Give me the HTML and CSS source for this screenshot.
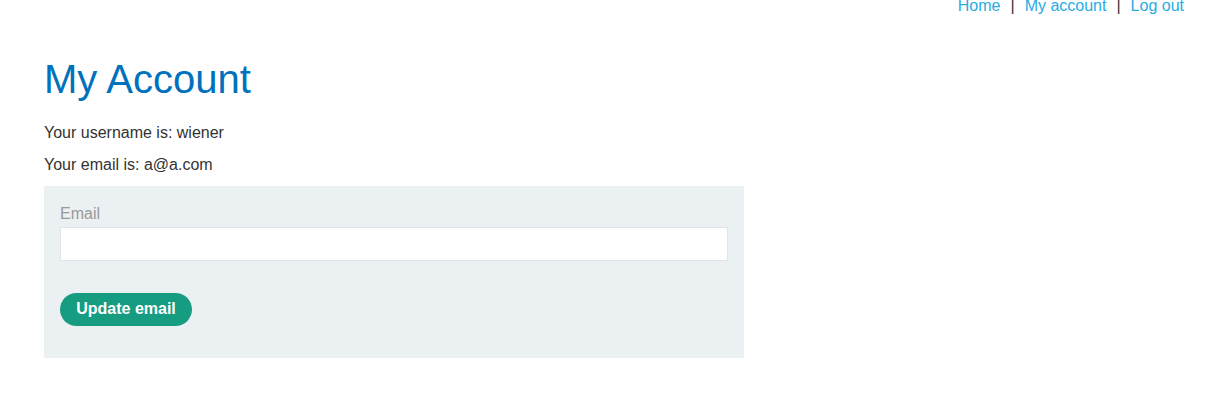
FILE: index.html
```html
<!DOCTYPE html>
<html lang="en">
<head>
<meta charset="utf-8">
<title>My Account</title>
<link rel="stylesheet" href="styles.css">
</head>
<body>
<nav class="top-links">
  <a href="#">Home</a><span class="sep">|</span><a href="#">My account</a><span class="sep">|</span><a href="#">Log out</a>
</nav>
<main class="content">
  <h1 class="title">My Account</h1>
  <p class="info">Your username is: wiener</p>
  <p class="info info-second">Your email is: a@a.com</p>
  <form class="email-form">
    <label class="field-label" for="email">Email</label>
    <input class="field-input" id="email" type="email" name="email">
    <button class="btn" type="button">Update email</button>
  </form>
</main>
</body>
</html>
```

FILE: styles.css
```css
* { box-sizing: border-box; }
html, body { margin: 0; padding: 0; background: #fff; }
body {
  font-family: "Liberation Sans", Arial, sans-serif;
  font-size: 16px;
  color: #333332;
}
.top-links {
  display: flex;
  justify-content: flex-end;
  align-items: center;
  gap: 10px;
  padding-right: 33px;
  margin-top: -2.5px;
  line-height: 16px;
}
.top-links a {
  color: #29abe2;
  text-decoration: none;
}
.top-links .sep { color: #333332; }
.content {
  padding-left: 44px;
}
.title {
  margin: 45.5px 0 0;
  font-size: 40px;
  line-height: 40px;
  font-weight: 400;
  color: #0071bc;
}
.info {
  margin: 23.5px 0 0;
  line-height: 20px;
}
.info-second { margin-top: 12px; }
.email-form {
  width: 700px;
  margin-top: 11px;
  background: #ebf0f2;
  padding: 18.5px 16px 32px;
  display: flex;
  flex-direction: column;
  align-items: flex-start;
}
.field-label {
  color: #999;
  line-height: 20px;
}
.field-input {
  width: 100%;
  height: 34px;
  margin-top: 2.5px;
  border: 1px solid #e4e4e4;
  background: #fff;
  font: inherit;
}
.btn {
  margin-top: 32px;
  height: 33px;
  width: 132px;
  border: 0;
  border-radius: 17px;
  background: #169c80;
  color: #fff;
  font-family: "Liberation Sans", Arial, sans-serif;
  font-size: 16px;
  font-weight: 700;
  padding: 0;
}
```
